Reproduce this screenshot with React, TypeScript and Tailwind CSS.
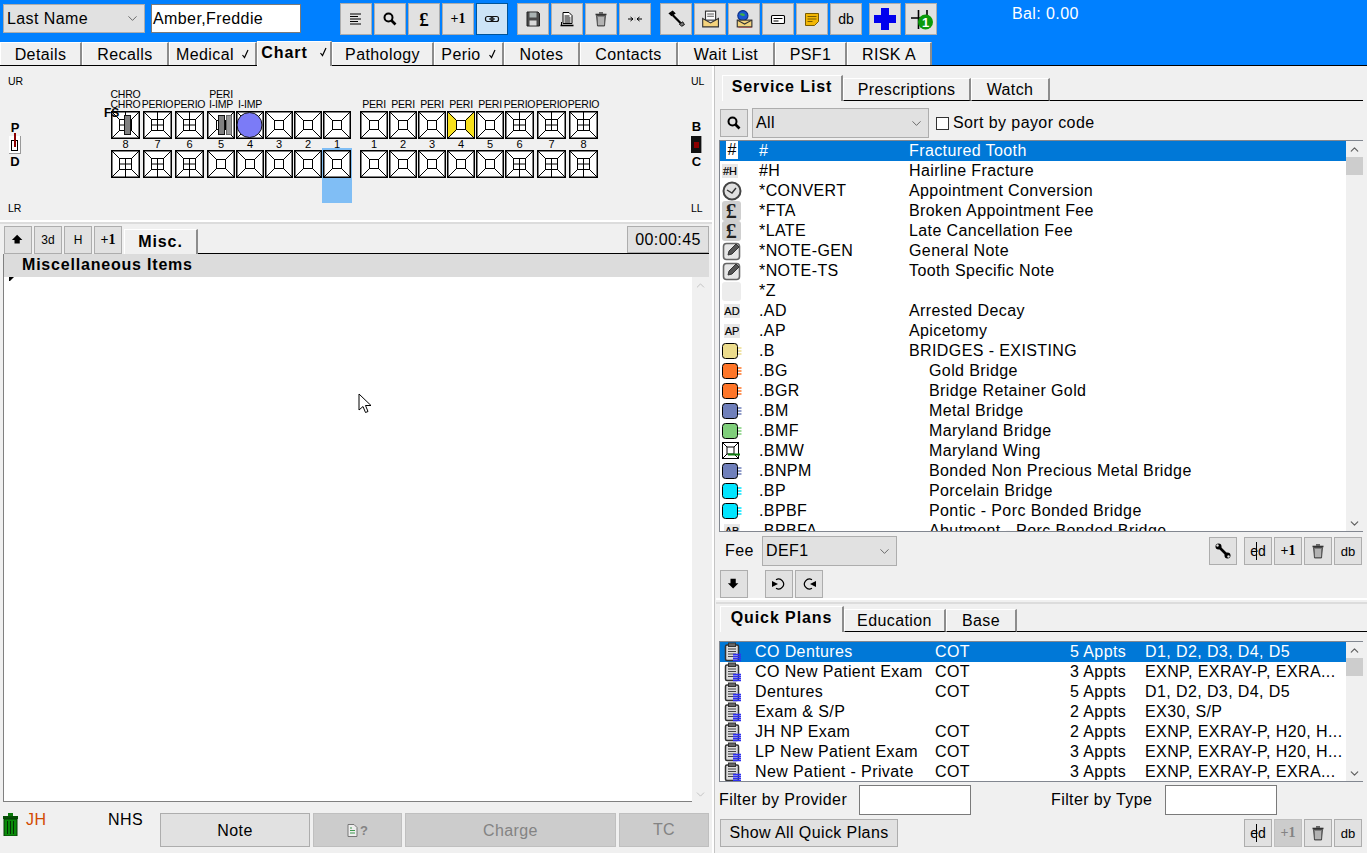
import type { ReactNode } from "react";
import { ChevronDown, ChevronUp } from "lucide-react";

const Btn = ({ w = "w-[28px]", h = "h-[28px]", active, off, children }: { w?: string; h?: string; active?: boolean; off?: boolean; children?: ReactNode }) => (
  <div
    className={`${w} ${h} shrink-0 flex items-center justify-center border text-[12px] tracking-normal ${
      active ? "bg-[#cce4f7] border-[#005499]" : off ? "bg-[#cccccc] border-[#bfbfbf] text-[#838383]" : "bg-[#e1e1e1] border-[#adadad] text-black"
    }`}
  >
    {children}
  </div>
);

const TopBtn = ({ active, children }: { active?: boolean; children?: ReactNode }) => (
  <Btn w="w-[32px]" h="h-[32px]" active={active}>
    {children}
  </Btn>
);

const Combo = ({ w, h = "h-[30px]", label }: { w: string; h?: string; label: string }) => (
  <div className={`${w} ${h} shrink-0 flex items-center justify-between bg-[#e1e1e1] border border-[#adadad] pl-[3px] pr-[4px] text-black`}>
    <span>{label}</span>
    <ChevronDown size={15} strokeWidth={1.1} className="text-[#333]" />
  </div>
);

const Tick = () => (
  <svg width="7" height="10" viewBox="0 0 7 10" className="shrink-0 mb-[3px]">
    <path d="M0.5 6 L2.5 8.5 L6 1" stroke="#000" strokeWidth="1.2" fill="none" />
  </svg>
);

const Icon = ({ children, s = 16 }: { children: ReactNode; s?: number }) => (
  <svg width={s} height={s} viewBox="0 0 16 16">
    {children}
  </svg>
);

const AlignIcon = () => (
  <Icon>
    <path d="M2 3h11M2 5.5h8M2 8h11M2 10.500h8M2 13h11" stroke="#000" strokeWidth="1" />
  </Icon>
);
const SearchIcon = () => (
  <Icon>
    <circle cx="6.500" cy="6.500" r="4" fill="none" stroke="#000" strokeWidth="2" />
    <path d="M9.500 9.500l4 4" stroke="#000" strokeWidth="2.600" />
  </Icon>
);
const Pound = () => <span className="font-['Liberation_Serif',serif] font-bold text-[19px] leading-none">£</span>;
const PlusOne = () => <span className="font-['Liberation_Serif',serif] font-bold text-[14px] leading-none">+1</span>;
const LinkIcon = () => (
  <Icon>
    <rect x="1.500" y="5.500" width="7.500" height="5" rx="2" fill="none" stroke="#111" strokeWidth="1.200" />
    <rect x="7" y="5.500" width="7.500" height="5" rx="2" fill="none" stroke="#111" strokeWidth="1.200" />
    <path d="M5 8h6" stroke="#111" />
  </Icon>
);
const SaveIcon = () => (
  <Icon>
    <path d="M2 1h11l1.500 1.500V15H2z" fill="#4a4a4a" stroke="#222" />
    <rect x="4.500" y="1.500" width="7" height="5" fill="#a9b2b2" />
    <rect x="4.500" y="9.500" width="7" height="5" fill="#d9d9d9" />
  </Icon>
);
const PrintIcon = () => (
  <Icon>
    <path d="M4 1.500h6l3 3v8H4z" fill="#fff" stroke="#000" />
    <path d="M5.500 5h5M5.500 7h6M5.500 9h6M5.500 11h6" stroke="#000" />
    <path d="M1.500 14.500h13" stroke="#000" strokeWidth="1.600" />
    <path d="M2.500 11v3" stroke="#000" />
  </Icon>
);
const TrashIcon = () => (
  <Icon>
    <path d="M2.500 3.500h11" stroke="#333" strokeWidth="1.600" />
    <rect x="6" y="1" width="4" height="2" fill="#666" />
    <path d="M3.500 4.500h9l-1 10.500h-7z" fill="#808080" stroke="#333" strokeWidth="0.800" />
    <path d="M6 6v8M8 6v8M10 6v8" stroke="#e5e5e5" />
  </Icon>
);
const ArrowsIcon = () => (
  <Icon>
    <path d="M1 8h5M3.500 6L6 8l-2.500 2M15 8h-5M12.500 6L10 8l2.500 2" stroke="#000" fill="none" />
    <path d="M8 6v4" stroke="#bbb" />
  </Icon>
);
const SyringeIcon = () => (
  <Icon s={18}>
    <path d="M2 3l3-2 2 2-3 2z" fill="#000" stroke="#000" />
    <path d="M5 4.500l7 7" stroke="#000" strokeWidth="2" />
    <path d="M11 12.500l3-2 1.500 2.500-2.500 1.500z" fill="#777" stroke="#000" strokeWidth="0.800" />
  </Icon>
);
const MailDocIcon = () => (
  <Icon s={18}>
    <rect x="4" y="1" width="9" height="8" fill="#fff" stroke="#333" />
    <path d="M5.500 3.500h6M5.500 5.500h6" stroke="#555" />
    <path d="M1.500 7.500l7 4 7-4v7.500h-14z" fill="#f4d37c" stroke="#333" />
  </Icon>
);
const GlobeMailIcon = () => (
  <Icon s={18}>
    <circle cx="7" cy="5" r="4.500" fill="#1957d2" stroke="#0a2f88" />
    <path d="M4 3.500c2-1 4-.5 5 1-1 1.500-3 1-5-1z" fill="#3fae49" />
    <rect x="2" y="9" width="13" height="6" fill="#f4d37c" stroke="#333" />
    <path d="M2 9l6.500 3.500L15 9" stroke="#333" fill="none" />
    <path d="M3 16h12" stroke="#a33" />
  </Icon>
);
const CardIcon = () => (
  <Icon>
    <rect x="1.500" y="4.500" width="13" height="8" rx="1" fill="#fff" stroke="#000" strokeWidth="1.100" />
    <path d="M3.500 7.500h9M3.500 10h5" stroke="#000" />
  </Icon>
);
const NoteIcon = () => (
  <Icon>
    <path d="M1.500 2.500h13v8l-4 4h-9z" fill="#f2b705" stroke="#7a5c00" />
    <path d="M3.500 5.500h9M3.500 8h9M3.500 10.500h5" stroke="#7a5c00" />
  </Icon>
);
const CrossIcon = () => (
  <svg width="22" height="22" viewBox="0 0 22 22">
    <path d="M7 0h8v7h7v8h-7v7H7v-7H0V7h7z" fill="#0000ee" />
  </svg>
);
const BadgeIcon = () => (
  <svg width="24" height="24" viewBox="0 0 24 24">
    <path d="M2 11h12M9.500 3v19M18 3v8" stroke="#000" strokeWidth="1.600" />
    <circle cx="16.500" cy="15" r="7.500" fill="#0a9a0a" />
    <text x="16.500" y="19.500" fontSize="13" fontWeight="bold" fill="#fff" textAnchor="middle" fontFamily="Liberation Sans">1</text>
  </svg>
);
const EdIcon = () => (
  <span className="relative text-[14px] leading-none">
    ed
    <span className="absolute left-[6px] -top-[2px] h-[18px] w-px bg-black" />
  </span>
);
const WrenchIcon = () => (
  <Icon>
    <path d="M3 3l10 10" stroke="#000" strokeWidth="2.600" />
    <circle cx="3.500" cy="3.500" r="3" fill="#000" />
    <circle cx="12.500" cy="12.500" r="3" fill="#000" />
    <circle cx="2.500" cy="2.500" r="1.200" fill="#e1e1e1" />
    <circle cx="13.500" cy="13.500" r="1.200" fill="#e1e1e1" />
  </Icon>
);
const HomeArrow = ({ down }: { down?: boolean }) => (
  <Icon s={14}>
    <path d={down ? "M4 2h6v5h3l-6 6-6-6h3z" : "M7 2l6 6h-3v4H4V8H1z"} fill="#000" />
  </Icon>
);
const RotateIcon = ({ flip }: { flip?: boolean }) => (
  <svg width="16" height="16" viewBox="0 0 16 16" className={flip ? "-scale-x-100" : ""}>
    <path d="M5 3.700A5 5 0 1 1 5 12.300" fill="none" stroke="#000" strokeWidth="1.200" />
    <path d="M1 5l6 3-6 3z" fill="#000" />
  </svg>
);
const DocQuery = () => (
  <span className="flex items-center gap-[2px] text-[13px] font-bold leading-none">
    <svg width="11" height="13" viewBox="0 0 11 13">
      <path d="M1 .5h6l3 3v9H1z" fill="#eee" stroke="#777" />
      <path d="M3 4h2M3 6.500h5M3 9h5" stroke="#3f9a4f" />
    </svg>
    ?
  </span>
);

const MainTab = ({ label, w, active, tick }: { label: string; w: string; active?: boolean; tick?: boolean }) => (
  <div
    className={`${w} shrink-0 flex items-center justify-center bg-[#f0f0f0] border-l border-t border-l-white border-t-white border-r-2 border-r-[#8c8c8c] ${
      active ? "h-[25px] font-bold tracking-[0.9px] relative z-10 -mb-px pb-[2px] gap-[12px]" : tick ? "h-[23px] pt-[2px] gap-[8px]" : "h-[23px] pt-[2px]"
    }`}
  >
    <span>{label}</span>
    {tick && <Tick />}
  </div>
);

const PaneTabs = ({ tabs, pl }: { tabs: { label: string; w: string }[]; pl: string }) => (
  <div className={`flex h-[26px] items-end ${pl}`}>
    {tabs.map((t, i) => (
      <div
        key={t.label}
        className={`${t.w} shrink-0 flex items-center justify-center bg-[#f0f0f0] border-t border-l border-t-white border-l-white border-r-2 border-r-[#8c8c8c] ${
          i === 0 ? "h-[26px] font-bold tracking-[0.9px] pb-[3px]" : "h-[23px] border-b border-b-black"
        }`}
      >
        {t.label}
      </div>
    ))}
    <div className="flex-1 h-full border-b border-black" />
  </div>
);

const Tooth = ({ w, bottom, mark }: { w: number; bottom?: boolean; mark?: string }) => {
  const molar = w === 29;
  const a = molar ? 8 : 9;
  const bx = w - a;
  const by = 28 - a;
  return (
    <svg width={w} height={28} viewBox={`0 0 ${w} 28`} className="relative z-10 block">
      <rect x="0.750" y="0.750" width={w - 1.5} height="26.500" fill="#fff" stroke="#000" strokeWidth="1.500" />
      {mark === "yellow" && <path d={`M1 1L${a} ${a - 1}V${by + 1}L1 27zM${w - 1} 1L${bx} ${a - 1}V${by + 1}L${w - 1} 27z`} fill="#f7e01b" />}
      <path d={`M1 1L${a} ${a}M${w - 1} 1L${bx} ${a}M1 27L${a} ${by}M${w - 1} 27L${bx} ${by}`} stroke="#000" />
      <rect x={a + 0.5} y={a + 0.5} width={bx - a - 1} height={by - a - 1} fill="#fff" stroke="#000" />
      {molar && <path d={`M${w / 2} ${bottom ? a : 0}V${bottom ? 28 : by}M${a} 14H${bx}`} stroke="#000" />}
      {mark === "bar" && <rect x="13.500" y="4.500" width="6" height="19" fill="#808080" stroke="#111" />}
      {mark === "bars" && (
        <>
          <rect x="11.500" y="4.500" width="6" height="19" fill="#808080" stroke="#111" />
          <rect x="19.500" y="4.500" width="5" height="19" fill="#999" stroke="#666" />
        </>
      )}
      {mark === "circle" && <circle cx="13.500" cy="14" r="12.500" fill="#7b7bf7" stroke="#111" />}
    </svg>
  );
};

type ToothCol = { n: number; w: number; cell: string; labels: string[]; mark?: string; sel?: boolean };

const upper: ToothCol[] = [
  { n: 8, w: 29, cell: "w-[32px]", labels: ["CHRO", "CHRO"], mark: "bar" },
  { n: 7, w: 29, cell: "w-[32px]", labels: ["PERIO"] },
  { n: 6, w: 29, cell: "w-[32px]", labels: ["PERIO"] },
  { n: 5, w: 28, cell: "w-[29px]", labels: ["PERI", "I-IMP"], mark: "bars" },
  { n: 4, w: 28, cell: "w-[29px]", labels: ["I-IMP"], mark: "circle" },
  { n: 3, w: 28, cell: "w-[29px]", labels: [] },
  { n: 2, w: 28, cell: "w-[29px]", labels: [] },
  { n: 1, w: 28, cell: "w-[29px]", labels: [], sel: true },
];
const upperLeft: ToothCol[] = [
  { n: 1, w: 28, cell: "w-[29px]", labels: ["PERI"] },
  { n: 2, w: 28, cell: "w-[29px]", labels: ["PERI"] },
  { n: 3, w: 28, cell: "w-[29px]", labels: ["PERI"] },
  { n: 4, w: 28, cell: "w-[29px]", labels: ["PERI"], mark: "yellow" },
  { n: 5, w: 28, cell: "w-[29px]", labels: ["PERI"] },
  { n: 6, w: 29, cell: "w-[32px]", labels: ["PERIO"] },
  { n: 7, w: 29, cell: "w-[32px]", labels: ["PERIO"] },
  { n: 8, w: 29, cell: "w-[32px]", labels: ["PERIO"] },
];

const Column = ({ t }: { t: ToothCol }) => (
  <div className={`${t.cell} shrink-0`}>
    <div className="h-[45px] flex flex-col items-center justify-end leading-[10px] text-[10.5px] tracking-[-0.2px] pb-[2px]" style={{ width: t.w }}>
      {t.labels.map((l, i) => (
        <span key={i} className="whitespace-nowrap">
          {l}
        </span>
      ))}
    </div>
    <div className="relative">
      <Tooth w={t.w} mark={t.mark} />
      {t.mark === "bar" && <span className="absolute z-20 -left-[7px] -top-[4px] text-[12px] font-bold tracking-normal leading-none">FS</span>}
    </div>
    <div className="h-[11px] flex justify-center items-center text-[11px] tracking-normal leading-none" style={{ width: t.w }}>
      {t.n}
    </div>
    <div className="relative">
      {t.sel && <div className="absolute -left-px -top-[2px] w-[30px] h-[55px] bg-[#80bef5]" />}
      <Tooth w={t.w} bottom />
    </div>
  </div>
);

const Chart = () => (
  <div className="h-[154px] flex pl-[8px] pr-[5px]">
    <div className="w-[103px] flex flex-col justify-between pt-[9px] pb-[6px] text-[10.5px] tracking-normal leading-[12px]">
      <span>UR</span>
      <div className="w-[14px] flex flex-col items-center text-[13px] font-bold leading-[12px]">
        <span>P</span>
        <div className="relative w-[12px] h-[18px] my-[2px] bg-white border-r border-b border-[#999] flex justify-center">
          <div className="w-[7px] h-[11px] mt-[4px] border border-black" />
          <div className="absolute -top-[3px] left-[5px] w-[2px] h-[14px] bg-[#8b0000]" />
        </div>
        <span>D</span>
      </div>
      <span>LR</span>
    </div>
    <div className="flex">
      {upper.map((t) => (
        <Column key={t.n} t={t} />
      ))}
    </div>
    <div className="flex ml-[8px]">
      {upperLeft.map((t) => (
        <Column key={t.n} t={t} />
      ))}
    </div>
    <div className="ml-auto w-[16px] flex flex-col justify-between pt-[9px] pb-[6px] text-[10.5px] tracking-normal leading-[12px]">
      <span>UL</span>
      <div className="w-[11px] flex flex-col items-center text-[13px] font-bold leading-[12px]">
        <span>B</span>
        <div className="w-[11px] h-[17px] my-[3px] bg-[#111] border-r border-[#999] flex items-center justify-center">
          <div className="w-[5px] h-[6px] bg-[#8b0000]" />
        </div>
        <span>C</span>
      </div>
      <span>LL</span>
    </div>
  </div>
);

const ScrollBar = ({ thumb, pale }: { thumb?: boolean; pale?: boolean }) => (
  <div className="w-[17px] shrink-0 flex flex-col items-center bg-[#f0f0f0]">
    <div className="h-[16px] flex items-center">
      <ChevronUp size={13} strokeWidth={pale ? 1.4 : 2.2} className={pale ? "text-[#b5b5b5]" : "text-[#606060]"} />
    </div>
    {thumb && <div className="w-full h-[18px] bg-[#cdcdcd]" />}
    <div className="mt-auto h-[16px] flex items-center">
      <ChevronDown size={13} strokeWidth={pale ? 1.4 : 2.2} className={pale ? "text-[#b5b5b5]" : "text-[#606060]"} />
    </div>
  </div>
);

const Stub = ({ text, sel }: { text: string; sel?: boolean }) => (
  <div
    className={`flex items-center justify-center leading-none tracking-normal text-black ${
      sel ? "ml-[4px] w-[12px] h-[18px] -mt-[2px] bg-white text-[16px]" : "w-[16px] h-[14px] bg-[#e8e8e8] text-[11px] [-webkit-text-stroke:0.2px_#000]"
    }`}
  >
    {text}
  </div>
);

const Clock = () => (
  <svg width="20" height="20" viewBox="0 0 20 20">
    <circle cx="10" cy="10" r="8.500" fill="#e0e0e0" stroke="#444" strokeWidth="2" />
    <path d="M5 9l5 3 4-5" fill="none" stroke="#333" strokeWidth="1.400" />
  </svg>
);
const GrayPound = () => (
  <div className="w-[19px] h-[20px] bg-[#cfcfcf] rounded-[3px] flex items-center justify-center font-['Liberation_Serif',serif] font-bold text-[22px] leading-[20px] text-[#222]">£</div>
);
const NotePen = () => (
  <svg width="20" height="20" viewBox="0 0 20 20">
    <rect x="1.500" y="2.500" width="16" height="16" rx="3" fill="#e6e6e6" stroke="#666" strokeWidth="1.600" />
    <path d="M6 14l1-4 7-7 3 3-7 7z" fill="#555" stroke="#333" />
  </svg>
);
const Bridge = ({ color }: { color: string }) => (
  <svg width="20" height="16" viewBox="0 0 20 16">
    <rect x="0.500" y="0.500" width="15" height="15" rx="3" fill={color} stroke="#000" />
    <path d="M16 5h3.500M16 8h3.500M16 11h3.500" stroke={color} strokeWidth="1.300" />
  </svg>
);
const Wing = () => (
  <svg width="18" height="18" viewBox="0 0 18 18">
    <rect x="0.500" y="0.500" width="16" height="16" fill="#fff" stroke="#000" />
    <rect x="5" y="5" width="7" height="7" fill="none" stroke="#000" />
    <path d="M1 1l4 4M16 1l-4 4M1 16l4-4M16 16l-4-4" stroke="#000" />
    <path d="M6 12.500h12" stroke="#0a7a0a" strokeWidth="2" />
  </svg>
);
const Clipboard = () => (
  <svg width="20" height="20" viewBox="0 0 20 20">
    <rect x="2.500" y="3" width="13" height="15.500" rx="1.500" fill="#ddd" stroke="#333" strokeWidth="1.500" />
    <rect x="5.500" y="1" width="7" height="3.500" fill="#666" stroke="#333" />
    <path d="M5 7h8M5 9.500h8M5 12h8M5 14.500h8" stroke="#444" />
    <path d="M10 12.500h8M10 14.500h8M10 16.500h8M10 18.500h8" stroke="#3030f0" strokeWidth="1.400" />
  </svg>
);

const serviceRows: { icon: ReactNode; code: string; desc: string; child?: boolean }[] = [
  { icon: <Stub text="#" sel />, code: "#", desc: "Fractured Tooth" },
  { icon: <Stub text="#H" />, code: "#H", desc: "Hairline Fracture" },
  { icon: <Clock />, code: "*CONVERT", desc: "Appointment Conversion" },
  { icon: <GrayPound />, code: "*FTA", desc: "Broken Appointment Fee" },
  { icon: <GrayPound />, code: "*LATE", desc: "Late Cancellation Fee" },
  { icon: <NotePen />, code: "*NOTE-GEN", desc: "General Note" },
  { icon: <NotePen />, code: "*NOTE-TS", desc: "Tooth Specific Note" },
  { icon: <div className="w-[19px] h-[19px] bg-[#ececec] rounded-[3px]" />, code: "*Z", desc: "" },
  { icon: <div className="pl-[2px]"><Stub text="AD" /></div>, code: ".AD", desc: "Arrested Decay" },
  { icon: <div className="pl-[2px]"><Stub text="AP" /></div>, code: ".AP", desc: "Apicetomy" },
  { icon: <Bridge color="#ecdc8c" />, code: ".B", desc: "BRIDGES - EXISTING" },
  { icon: <Bridge color="#ff7527" />, code: ".BG", desc: "Gold Bridge", child: true },
  { icon: <Bridge color="#ff7527" />, code: ".BGR", desc: "Bridge Retainer Gold", child: true },
  { icon: <Bridge color="#6f7fbb" />, code: ".BM", desc: "Metal Bridge", child: true },
  { icon: <Bridge color="#7fcf7a" />, code: ".BMF", desc: "Maryland Bridge", child: true },
  { icon: <Wing />, code: ".BMW", desc: "Maryland Wing", child: true },
  { icon: <Bridge color="#6f7fbb" />, code: ".BNPM", desc: "Bonded Non Precious Metal Bridge", child: true },
  { icon: <Bridge color="#00e5ff" />, code: ".BP", desc: "Porcelain Bridge", child: true },
  { icon: <Bridge color="#00e5ff" />, code: ".BPBF", desc: "Pontic - Porc Bonded Bridge", child: true },
  { icon: <div className="pl-[2px]"><Stub text="AB" /></div>, code: ".BPBFA", desc: "Abutment - Porc Bonded Bridge", child: true },
];

const plans = [
  ["CO Dentures", "COT", "5 Appts", "D1, D2, D3, D4, D5"],
  ["CO New Patient Exam", "COT", "3 Appts", "EXNP, EXRAY-P, EXRA..."],
  ["Dentures", "COT", "5 Appts", "D1, D2, D3, D4, D5"],
  ["Exam & S/P", "", "2 Appts", "EX30, S/P"],
  ["JH NP Exam", "COT", "2 Appts", "EXNP, EXRAY-P, H20, H..."],
  ["LP New Patient Exam", "COT", "3 Appts", "EXNP, EXRAY-P, H20, H..."],
  ["New Patient - Private", "COT", "3 Appts", "EXNP, EXRAY-P, EXRA..."],
];

const ToolRow = ({ plusOff }: { plusOff?: boolean }) => (
  <div className="flex gap-[2px]">
    <Btn>
      <EdIcon />
    </Btn>
    <Btn off={plusOff}>
      <PlusOne />
    </Btn>
    <Btn>
      <TrashIcon />
    </Btn>
    <Btn>
      <span className="text-[13px] leading-none">db</span>
    </Btn>
  </div>
);

export default function App() {
  return (
    <div className="w-[1367px] h-[853px] overflow-hidden bg-[#f0f0f0] font-['Liberation_Sans',sans-serif] text-[16px] tracking-[0.4px] text-black">
      <div className="h-[66px] bg-[#0080ff]">
        <div className="h-[42px] flex items-start pt-[3px] pl-[3px]">
          <div className="mt-[1px]">
            <Combo w="w-[142px]" h="h-[29px]" label="Last Name" />
          </div>
          <div className="mt-[1px] ml-[6px] w-[150px] h-[29px] bg-white border border-[#7a7a7a] pl-[1px] flex items-center">Amber,Freddie</div>
          <div className="ml-[39px] flex gap-[2px]">
            <TopBtn><AlignIcon /></TopBtn>
            <TopBtn><SearchIcon /></TopBtn>
            <TopBtn><Pound /></TopBtn>
            <TopBtn><PlusOne /></TopBtn>
            <TopBtn active><LinkIcon /></TopBtn>
          </div>
          <div className="ml-[9px] flex gap-[2px]">
            <TopBtn><SaveIcon /></TopBtn>
            <TopBtn><PrintIcon /></TopBtn>
            <TopBtn><TrashIcon /></TopBtn>
            <TopBtn><ArrowsIcon /></TopBtn>
          </div>
          <div className="ml-[9px] flex gap-[2px]">
            <TopBtn><SyringeIcon /></TopBtn>
            <TopBtn><MailDocIcon /></TopBtn>
            <TopBtn><GlobeMailIcon /></TopBtn>
            <TopBtn><CardIcon /></TopBtn>
            <TopBtn><NoteIcon /></TopBtn>
            <TopBtn><span className="text-[14px] leading-none">db</span></TopBtn>
          </div>
          <div className="ml-[7px] flex gap-[4px]">
            <TopBtn><CrossIcon /></TopBtn>
            <TopBtn><BadgeIcon /></TopBtn>
          </div>
          <span className="ml-[75px] mt-[2px] text-white leading-[18px]">Bal: 0.00</span>
        </div>
        <div className="h-[24px] flex items-end border-b border-black">
          <MainTab label="Details" w="w-[82px]" />
          <MainTab label="Recalls" w="w-[87px]" />
          <MainTab label="Medical" w="w-[88px]" tick />
          <MainTab label="Chart" w="w-[75px]" active tick />
          <MainTab label="Pathology" w="w-[102px]" />
          <MainTab label="Perio" w="w-[70px]" tick />
          <MainTab label="Notes" w="w-[76px]" />
          <MainTab label="Contacts" w="w-[98px]" />
          <MainTab label="Wait List" w="w-[97px]" />
          <MainTab label="PSF1" w="w-[72px]" />
          <MainTab label="RISK A" w="w-[85px]" />
        </div>
      </div>

      <div className="h-[787px] flex">
        <div className="w-[712px] shrink-0 flex flex-col">
          <Chart />
          <div className="h-[6px]">
            <div className="h-[2px] bg-white" />
            <div className="h-[2px] bg-[#dcdcdc]" />
          </div>
          <div className="h-[28px] flex items-end pl-[4px] w-[709px]">
            <div className="flex gap-[2px] mr-[2px]">
              <Btn><HomeArrow /></Btn>
              <Btn><span className="text-[12px]">3d</span></Btn>
              <Btn><span className="text-[12px]">H</span></Btn>
              <Btn><PlusOne /></Btn>
            </div>
            <div className="w-[74px] h-[25px] flex items-center justify-center font-bold tracking-[0.9px] bg-[#f0f0f0] border-t border-l border-t-white border-l-white border-r-2 border-r-[#8c8c8c]">Misc.</div>
            <div className="flex-1 h-full flex justify-end border-b border-black">
              <div className="w-[82px] h-[27px] flex items-center justify-center bg-[#e1e1e1] border border-[#adadad]">00:00:45</div>
            </div>
          </div>
          <div className="ml-[3px] w-[706px] h-[23px] bg-[#dcdcdc] border-l border-[#808080] pl-[18px] pb-[2px] font-bold tracking-[0.8px] flex items-center">Miscellaneous Items</div>
          <div className="ml-[3px] w-[706px] h-[525px] flex border-l border-[#808080]">
            <div className="relative flex-1 bg-white border-b border-[#808080]">
              <svg width="5" height="4" viewBox="0 0 5 4" className="ml-[5px] block">
                <path d="M0 0h5L1 4H0z" fill="#000" />
              </svg>
              <svg width="14" height="21" viewBox="0 0 14 21" className="absolute left-[354px] top-[116px]">
                <path d="M1 1v16l4-3.500 2.500 6 2.500-1-2.500-6H13z" fill="#fff" stroke="#000" />
              </svg>
            </div>
            <ScrollBar pale />
          </div>
          <div className="h-[51px] flex pl-[3px]">
            <svg width="15" height="23" viewBox="0 0 15 23" className="mt-[11px] shrink-0">
              <rect x="5" y="0" width="5" height="3" fill="#0a7a0a" />
              <path d="M0 3h15v3H0z" fill="#064f06" />
              <path d="M1 6h13v17H1z" fill="#0a8a0a" stroke="#053a05" />
              <path d="M4.500 8v13M7.500 8v13M10.500 8v13" stroke="#043004" />
            </svg>
            <span className="ml-[8px] w-[82px] mt-[6px] text-[#d24a00]">JH</span>
            <span className="w-[52px] mt-[6px]">NHS</span>
            <div className="mt-[11px] flex gap-[3px] h-[34px]">
              <Btn w="w-[150px]" h="h-[34px]"><span className="text-[16px] tracking-[0.4px] pt-[2px]">Note</span></Btn>
              <Btn w="w-[89px]" h="h-[34px]" off><DocQuery /></Btn>
              <Btn w="w-[211px]" h="h-[34px]" off><span className="text-[16px] tracking-[0.4px] pt-[2px]">Charge</span></Btn>
              <Btn w="w-[90px]" h="h-[34px]" off><span className="text-[16px] tracking-[0.4px]">TC</span></Btn>
            </div>
          </div>
        </div>

        <div className="w-[4px] shrink-0 flex">
          <div className="w-[2px] bg-white" />
          <div className="w-[1px] bg-[#c4c4c4]" />
        </div>

        <div className="flex-1 flex flex-col min-w-0">
          <div className="pt-[9px] pr-[4px]">
            <PaneTabs
              pl="pl-[6px]"
              tabs={[
                { label: "Service List", w: "w-[121px]" },
                { label: "Prescriptions", w: "w-[128px]" },
                { label: "Watch", w: "w-[79px]" },
              ]}
            />
          </div>
          <div className="mt-[7px] h-[30px] flex items-center pl-[4px]">
            <Btn><SearchIcon /></Btn>
            <div className="ml-[4px]"><Combo w="w-[177px]" label="All" /></div>
            <div className="ml-[7px] w-[13px] h-[13px] bg-white border border-[#333]" />
            <span className="ml-[4px]">Sort by payor code</span>
          </div>
          <div className="mt-[2px] ml-[3px] w-[644px] h-[392px] flex border-y border-l border-[#828790]">
            <div className="flex-1 bg-white overflow-hidden">
              {serviceRows.map((r, i) => (
                <div key={r.code} className={`h-[20px] flex items-center whitespace-nowrap ${i === 0 ? "bg-[#0078d7] text-white" : ""}`}>
                  <div className="w-[39px] shrink-0 pl-[2px] flex justify-start">{r.icon}</div>
                  <span className="w-[150px] shrink-0">{r.code}</span>
                  <span className={r.child ? "pl-[20px]" : ""}>{r.desc}</span>
                </div>
              ))}
            </div>
            <ScrollBar thumb />
          </div>
          <div className="mt-[4px] h-[30px] flex items-center pr-[5px]">
            <span className="ml-[9px] w-[37px]">Fee</span>
            <Combo w="w-[135px]" label="DEF1" />
            <div className="ml-auto flex items-center gap-[7px]">
              <Btn><WrenchIcon /></Btn>
              <ToolRow />
            </div>
          </div>
          <div className="mt-[4px] h-[28px] flex pl-[4px]">
            <Btn><HomeArrow down /></Btn>
            <div className="ml-[17px] flex gap-[2px]">
              <Btn><RotateIcon /></Btn>
              <Btn><RotateIcon flip /></Btn>
            </div>
          </div>
          <div className="h-[8px]">
            <div className="h-[2px] bg-white" />
            <div className="h-[2px] mt-[2px] bg-[#dcdcdc]" />
          </div>
          <PaneTabs
            pl="pl-[4px]"
            tabs={[
              { label: "Quick Plans", w: "w-[124px]" },
              { label: "Education", w: "w-[102px]" },
              { label: "Base", w: "w-[71px]" },
            ]}
          />
          <div className="mt-[9px] ml-[3px] w-[644px] h-[141px] flex border-y border-l border-[#828790]">
            <div className="flex-1 bg-white overflow-hidden">
              {plans.map((p, i) => (
                <div key={p[0]} className={`h-[20px] flex items-center whitespace-nowrap ${i === 0 ? "bg-[#0078d7] text-white" : ""}`}>
                  <div className="w-[35px] shrink-0 pl-[3px]"><Clipboard /></div>
                  <span className="w-[180px] shrink-0">{p[0]}</span>
                  <span className="w-[135px] shrink-0">{p[1]}</span>
                  <span className="w-[75px] shrink-0">{p[2]}</span>
                  <span>{p[3]}</span>
                </div>
              ))}
            </div>
            <ScrollBar thumb />
          </div>
          <div className="mt-[3px] h-[30px] flex items-center pl-[3px]">
            <span className="w-[140px]">Filter by Provider</span>
            <div className="w-[112px] h-[30px] bg-white border border-[#7a7a7a]" />
            <span className="ml-[80px] w-[114px]">Filter by Type</span>
            <div className="w-[112px] h-[30px] bg-white border border-[#7a7a7a]" />
          </div>
          <div className="mt-[4px] h-[28px] flex pl-[4px] pr-[5px] justify-between">
            <Btn w="w-[178px]"><span className="text-[16px] tracking-[0.4px]">Show All Quick Plans</span></Btn>
            <ToolRow plusOff />
          </div>
        </div>
      </div>
    </div>
  );
}
